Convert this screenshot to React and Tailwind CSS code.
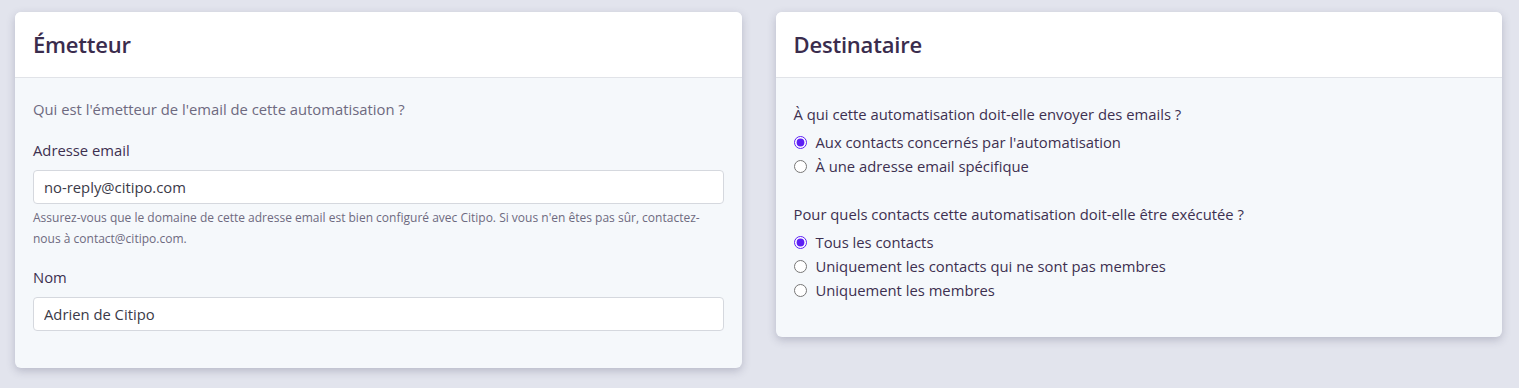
import React, { useState } from "react";

const FONT = { fontFamily: '"Segoe UI", "Open Sans", "Noto Sans", sans-serif' };

function Card({ title, children }) {
  return (
    <div className="rounded-md bg-[#f5f8fb] shadow-[0_3px_8px_rgba(60,60,90,0.25)] overflow-hidden">
      <div className="bg-white border-b border-[#e1e3e8] h-[66px] flex items-center px-[18px]">
        <h2 className="text-[22px] font-semibold text-[#3a2c4d] tracking-[-0.2px]">{title}</h2>
      </div>
      {children}
    </div>
  );
}

function Radio({ name, label, checked, onChange }) {
  return (
    <label className="flex items-center gap-[9px] h-[24px] text-[14.8px] text-[#3d3050] cursor-pointer">
      <input type="radio" name={name} checked={checked} onChange={onChange}
        className="w-[13px] h-[13px] m-0 accent-[#5b1ff4]" />
      {label}
    </label>
  );
}

export default function App() {
  const [email, setEmail] = useState("no-reply@citipo.com");
  const [name, setName] = useState("Adrien de Citipo");
  const [target, setTarget] = useState("contacts");
  const [scope, setScope] = useState("all");

  return (
    <div className="min-h-screen bg-[#e2e4ed] pt-[12px] pl-[15px] pr-[17px]" style={FONT}>
      <div className="grid grid-cols-2 gap-[34px] items-start">
        <Card title="Émetteur">
          <div className="px-[18px] pt-[20px] pb-[37px]">
            <p className="text-[14.8px] text-[#6e6a80] leading-[22px]">Qui est l'émetteur de l'email de cette automatisation ?</p>

            <label className="block mt-[19px] text-[14.8px] text-[#3d3050] leading-[22px]">Adresse email</label>
            <input value={email} onChange={e => setEmail(e.target.value)}
              className="mt-[9px] w-full h-[34px] rounded-[4px] border border-[#d5d8de] bg-white px-[10px] text-[14.8px] text-[#3b3a48] focus:outline-none" />
            <p className="mt-[3px] pr-[6px] text-[12px] leading-[21px] text-[#6e6a80]">
              Assurez-vous que le domaine de cette adresse email est bien configuré avec Citipo. Si vous n'en êtes pas sûr, contactez-nous à contact@citipo.com.
            </p>

            <label className="block mt-[17px] text-[14.8px] text-[#3d3050] leading-[22px]">Nom</label>
            <input value={name} onChange={e => setName(e.target.value)}
              className="mt-[9px] w-full h-[34px] rounded-[4px] border border-[#d5d8de] bg-white px-[10px] text-[14.8px] text-[#3b3a48] focus:outline-none" />
          </div>
        </Card>

        <Card title="Destinataire">
          <div className="px-[18px] pt-[25px] pb-[35px]">
            <p className="text-[14.8px] text-[#3d3050] leading-[22px]">À qui cette automatisation doit-elle envoyer des emails ?</p>
            <div className="mt-[5px] flex flex-col">
              <Radio name="target" label="Aux contacts concernés par l'automatisation" checked={target === "contacts"} onChange={() => setTarget("contacts")} />
              <Radio name="target" label="À une adresse email spécifique" checked={target === "email"} onChange={() => setTarget("email")} />
            </div>

            <p className="mt-[25px] text-[14.8px] text-[#3d3050] leading-[22px]">Pour quels contacts cette automatisation doit-elle être exécutée ?</p>
            <div className="mt-[5px] flex flex-col">
              <Radio name="scope" label="Tous les contacts" checked={scope === "all"} onChange={() => setScope("all")} />
              <Radio name="scope" label="Uniquement les contacts qui ne sont pas membres" checked={scope === "nonmembers"} onChange={() => setScope("nonmembers")} />
              <Radio name="scope" label="Uniquement les membres" checked={scope === "members"} onChange={() => setScope("members")} />
            </div>
          </div>
        </Card>
      </div>
    </div>
  );
}
